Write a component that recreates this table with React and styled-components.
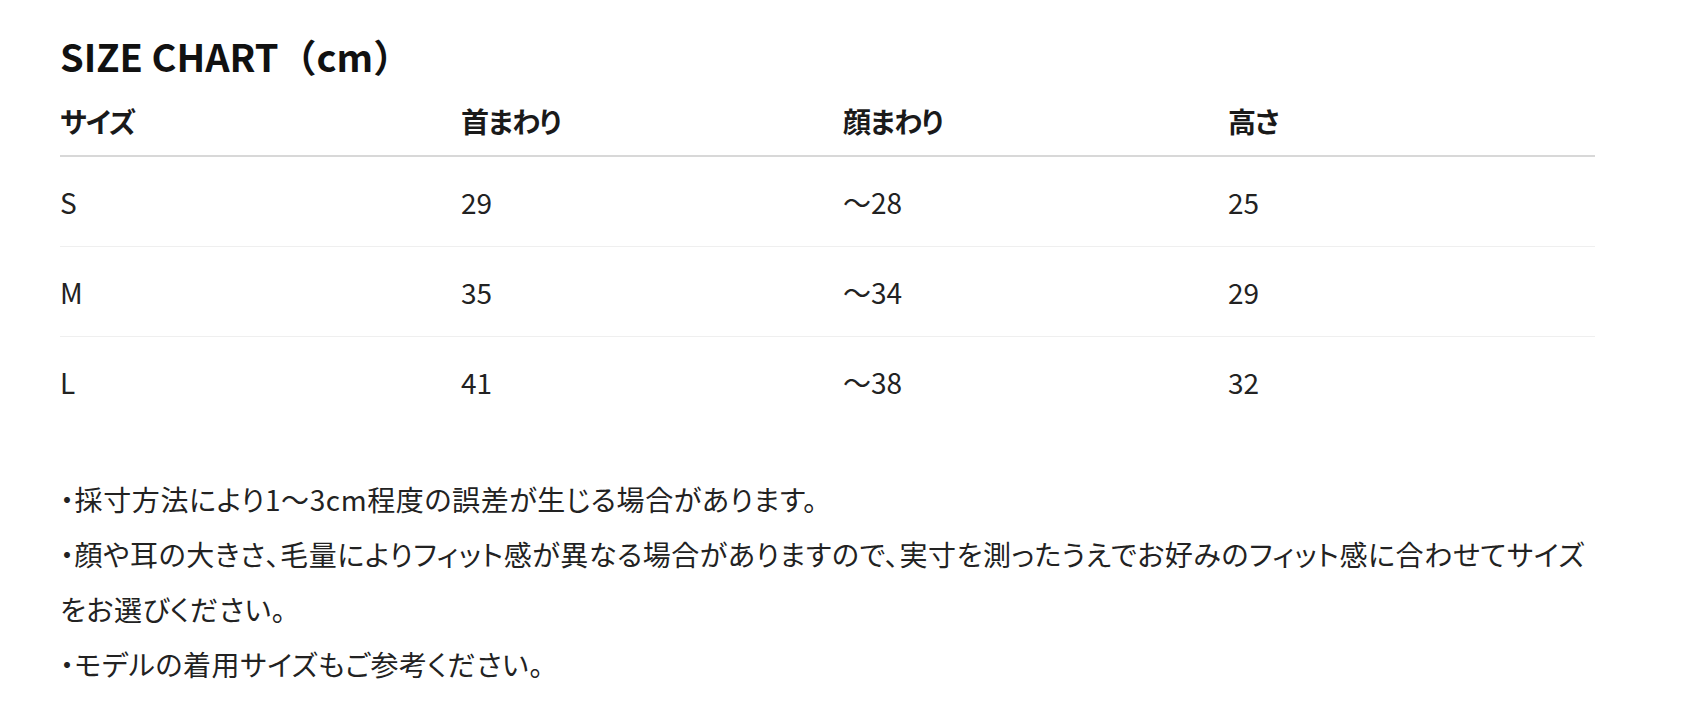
import styled, { createGlobalStyle } from "styled-components";

const GlobalStyle = createGlobalStyle`
  body {
    margin: 0;
    background: #fff;
    color: #1a1a1a;
    font-family: "Noto Sans CJK JP", "Noto Sans", sans-serif;
    font-feature-settings: "palt";
  }
`;

const StyledPage = styled.div`
  width: 1535px;
  padding: 30px 0 0 60px;
`;

const StyledTitle = styled.h2`
  margin: 0;
  font-size: 38px;
  line-height: 52px;
  font-weight: 700;
  color: #111;
  font-feature-settings: normal;
`;

const StyledTable = styled.div`
  display: grid;
  grid-template-columns: 401px 382px 385px 1fr;
`;

const StyledHeadCell = styled.div`
  padding: 19px 0 14px;
  font-size: 28px;
  line-height: 40px;
  font-weight: 700;
  letter-spacing: -1px;
  border-bottom: 2px solid #d8d8d8;
`;

const StyledCell = styled.div`
  display: flex;
  align-items: center;
  height: 89px;
  font-size: 28px;
  color: #222;
  border-bottom: ${({ $last }) => ($last ? "none" : "1px solid #efefef")};
`;

const StyledNotes = styled.div`
  margin-top: 46px;
  font-size: 28px;
  line-height: 55px;
  letter-spacing: 0.6px;
  white-space: nowrap;
  color: #222;
`;

const headers = ["サイズ", "首まわり", "顔まわり", "高さ"];

const rows = [
  ["S", "29", "～28", "25"],
  ["M", "35", "～34", "29"],
  ["L", "41", "～38", "32"],
];

export default function App() {
  return (
    <>
      <GlobalStyle />
      <StyledPage>
        <StyledTitle>SIZE CHART（cm）</StyledTitle>
        <StyledTable>
          {headers.map((h) => (
            <StyledHeadCell key={h}>{h}</StyledHeadCell>
          ))}
          {rows.map((row, i) =>
            row.map((value, j) => (
              <StyledCell key={`${i}-${j}`} $last={i === rows.length - 1}>
                {value}
              </StyledCell>
            ))
          )}
        </StyledTable>
        <StyledNotes>
          ・採寸方法により1～3cm程度の誤差が生じる場合があります。
          <br />
          ・顔や耳の大きさ、毛量によりフィット感が異なる場合がありますので、実寸を測ったうえでお好みのフィット感に合わせてサイズ
          <br />
          をお選びください。
          <br />
          ・モデルの着用サイズもご参考ください。
        </StyledNotes>
      </StyledPage>
    </>
  );
}
